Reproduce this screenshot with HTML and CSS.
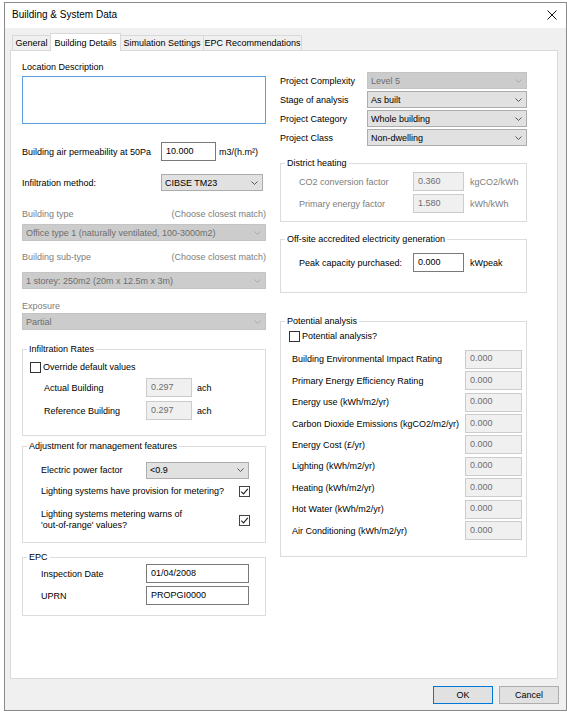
FILE: index.html
```html
<!DOCTYPE html>
<html lang="en">
<head>
    <meta charset="UTF-8">
    <title>Building &amp; System Data</title>
    <link rel="stylesheet" href="styles.css">
</head>
<body>

<div class="window">
    <div class="titlebar">
        <span class="title">Building &amp; System Data</span>
        <svg class="close" width="10" height="10" viewBox="0 0 10 10">
            <path d="M0.5 0.5 L9.5 9.5 M9.5 0.5 L0.5 9.5" stroke="#111" stroke-width="1" fill="none"/>
        </svg>
    </div>

    <div class="dialog-body">
        <div class="tabs">
            <div class="tab tab-general">General</div>
            <div class="tab tab-active">Building Details</div>
            <div class="tab tab-sim">Simulation Settings</div>
            <div class="tab tab-epc">EPC Recommendations</div>
        </div>

        <div class="panel">
            <!-- left column -->
            <div class="col">
                <div class="plain-label">Location Description</div>
                <textarea class="memo"></textarea>

                <div class="row row-perm">
                    <span class="lbl w139">Building air permeability at 50Pa</span>
                    <input class="edit w55" type="text" value="10.000">
                    <span class="unit u3">m3/(h.m²)</span>
                </div>

                <div class="row row-infil">
                    <span class="lbl w139">Infiltration method:</span>
                    <div class="combo w102"><span>CIBSE TM23</span><svg class="chev" width="7" height="4" viewBox="0 0 7 4"><path d="M0.5 0.5 L3.5 3.5 L6.5 0.5" stroke="#555" fill="none"/></svg></div>
                </div>

                <div class="hint hint-type"><span>Building type</span><span>(Choose closest match)</span></div>
                <div class="combo combo-off full mt4"><span>Office type 1 (naturally ventilated, 100-3000m2)</span><svg class="chev" width="7" height="4" viewBox="0 0 7 4"><path d="M0.5 0.5 L3.5 3.5 L6.5 0.5" stroke="#aaa" fill="none"/></svg></div>

                <div class="hint hint-sub"><span>Building sub-type</span><span>(Choose closest match)</span></div>
                <div class="combo combo-off full mt9"><span>1 storey: 250m2 (20m x 12.5m x 3m)</span><svg class="chev" width="7" height="4" viewBox="0 0 7 4"><path d="M0.5 0.5 L3.5 3.5 L6.5 0.5" stroke="#aaa" fill="none"/></svg></div>

                <div class="hint hint-exp"><span>Exposure</span></div>
                <div class="combo combo-off full mt1"><span>Partial</span><svg class="chev" width="7" height="4" viewBox="0 0 7 4"><path d="M0.5 0.5 L3.5 3.5 L6.5 0.5" stroke="#aaa" fill="none"/></svg></div>

                <fieldset class="group g-infil">
                    <legend>Infiltration Rates</legend>
                    <div class="group-body">
                        <div class="check-row">
                            <span class="check"></span>
                            <span>Override default values</span>
                        </div>
                        <div class="row rate-row mt5">
                            <span class="lbl w102">Actual Building</span>
                            <input class="edit edit-off w46" type="text" value="0.297" disabled>
                            <span class="unit u5">ach</span>
                        </div>
                        <div class="row rate-row mt4">
                            <span class="lbl w102">Reference Building</span>
                            <input class="edit edit-off w46" type="text" value="0.297" disabled>
                            <span class="unit u5">ach</span>
                        </div>
                    </div>
                </fieldset>

                <fieldset class="group g-adjust">
                    <legend>Adjustment for management features</legend>
                    <div class="group-body">
                        <div class="row adj-row h18">
                            <span class="lbl w105">Electric power factor</span>
                            <div class="combo w103"><span>&lt;0.9</span><svg class="chev" width="7" height="4" viewBox="0 0 7 4"><path d="M0.5 0.5 L3.5 3.5 L6.5 0.5" stroke="#555" fill="none"/></svg></div>
                        </div>
                        <div class="row adj-row h12 mt6">
                            <span class="lbl w198">Lighting systems have provision for metering?</span>
                            <span class="check checked"><svg width="9" height="9" viewBox="0 0 9 9"><path d="M1.2 4.6 L3.5 6.9 L7.8 1.8" stroke="#222" stroke-width="1.1" fill="none"/></svg></span>
                        </div>
                        <div class="row adj-row h22 mt12">
                            <span class="lbl w198 two-line">Lighting systems metering warns of<br>'out-of-range' values?</span>
                            <span class="check checked"><svg width="9" height="9" viewBox="0 0 9 9"><path d="M1.2 4.6 L3.5 6.9 L7.8 1.8" stroke="#222" stroke-width="1.1" fill="none"/></svg></span>
                        </div>
                    </div>
                </fieldset>

                <fieldset class="group g-epc">
                    <legend>EPC</legend>
                    <div class="group-body">
                        <div class="row adj-row h19">
                            <span class="lbl w105">Inspection Date</span>
                            <input class="edit w103" type="text" value="01/04/2008">
                        </div>
                        <div class="row adj-row h19 mt3">
                            <span class="lbl w105">UPRN</span>
                            <input class="edit w103" type="text" value="PROPGI0000">
                        </div>
                    </div>
                </fieldset>
            </div>

            <!-- right column -->
            <div class="col">
                <div class="row proj-row first">
                    <span class="lbl w87">Project Complexity</span>
                    <div class="combo combo-off w160"><span>Level 5</span><svg class="chev" width="7" height="4" viewBox="0 0 7 4"><path d="M0.5 0.5 L3.5 3.5 L6.5 0.5" stroke="#aaa" fill="none"/></svg></div>
                </div>
                <div class="row proj-row">
                    <span class="lbl w87">Stage of analysis</span>
                    <div class="combo w160"><span>As built</span><svg class="chev" width="7" height="4" viewBox="0 0 7 4"><path d="M0.5 0.5 L3.5 3.5 L6.5 0.5" stroke="#555" fill="none"/></svg></div>
                </div>
                <div class="row proj-row">
                    <span class="lbl w87">Project Category</span>
                    <div class="combo w160"><span>Whole building</span><svg class="chev" width="7" height="4" viewBox="0 0 7 4"><path d="M0.5 0.5 L3.5 3.5 L6.5 0.5" stroke="#555" fill="none"/></svg></div>
                </div>
                <div class="row proj-row">
                    <span class="lbl w87">Project Class</span>
                    <div class="combo w160"><span>Non-dwelling</span><svg class="chev" width="7" height="4" viewBox="0 0 7 4"><path d="M0.5 0.5 L3.5 3.5 L6.5 0.5" stroke="#555" fill="none"/></svg></div>
                </div>

                <fieldset class="group g-district">
                    <legend>District heating</legend>
                    <div class="group-body">
                        <div class="row h19">
                            <span class="lbl w114 muted">CO2 conversion factor</span>
                            <input class="edit edit-off w51" type="text" value="0.360" disabled>
                            <span class="unit u6 muted">kgCO2/kWh</span>
                        </div>
                        <div class="row h19 mt3">
                            <span class="lbl w114 muted">Primary energy factor</span>
                            <input class="edit edit-off w51" type="text" value="1.580" disabled>
                            <span class="unit u6 muted">kWh/kWh</span>
                        </div>
                    </div>
                </fieldset>

                <fieldset class="group g-offsite">
                    <legend>Off-site accredited electricity generation</legend>
                    <div class="group-body">
                        <div class="row h19">
                            <span class="lbl w114">Peak capacity purchased:</span>
                            <input class="edit w51" type="text" value="0.000">
                            <span class="unit u6">kWpeak</span>
                        </div>
                    </div>
                </fieldset>

                <fieldset class="group g-potential">
                    <legend>Potential analysis</legend>
                    <div class="group-body">
                        <div class="check-row h13">
                            <span class="check"></span>
                            <span>Potential analysis?</span>
                        </div>
                        <div class="pot-list">
                            <div class="row pot-row"><span class="lbl w173">Building Environmental Impact Rating</span><input class="edit edit-off w57" type="text" value="0.000" disabled></div>
                            <div class="row pot-row"><span class="lbl w173">Primary Energy Efficiency Rating</span><input class="edit edit-off w57" type="text" value="0.000" disabled></div>
                            <div class="row pot-row"><span class="lbl w173">Energy use (kWh/m2/yr)</span><input class="edit edit-off w57" type="text" value="0.000" disabled></div>
                            <div class="row pot-row"><span class="lbl w173">Carbon Dioxide Emissions (kgCO2/m2/yr)</span><input class="edit edit-off w57" type="text" value="0.000" disabled></div>
                            <div class="row pot-row"><span class="lbl w173">Energy Cost (£/yr)</span><input class="edit edit-off w57" type="text" value="0.000" disabled></div>
                            <div class="row pot-row"><span class="lbl w173">Lighting (kWh/m2/yr)</span><input class="edit edit-off w57" type="text" value="0.000" disabled></div>
                            <div class="row pot-row"><span class="lbl w173">Heating (kWh/m2/yr)</span><input class="edit edit-off w57" type="text" value="0.000" disabled></div>
                            <div class="row pot-row"><span class="lbl w173">Hot Water (kWh/m2/yr)</span><input class="edit edit-off w57" type="text" value="0.000" disabled></div>
                            <div class="row pot-row"><span class="lbl w173">Air Conditioning (kWh/m2/yr)</span><input class="edit edit-off w57" type="text" value="0.000" disabled></div>
                        </div>
                    </div>
                </fieldset>
            </div>
        </div>

        <div class="buttons">
            <button class="btn btn-default">OK</button>
            <button class="btn">Cancel</button>
        </div>
    </div>
</div>

</body>
</html>
```

FILE: styles.css
```css
/* Page */
html, body {
    margin: 0;
    padding: 0;
}

body {
    background-color: #fff;
    font-family: "Liberation Sans", Arial, sans-serif;
    font-size: 9px;
    color: #000;
}

/* Window frame */
.window {
    margin: 2px 0 0 4px;
    width: 563px;
    height: 709px;
    box-sizing: border-box;
    border: 1px solid #8a8a8a;
    background-color: #f0f0f0;
}

.titlebar {
    height: 25px;
    background-color: #fff;
    display: flex;
    align-items: center;
    padding-left: 7px;
}

.title {
    font-size: 10px;
    margin-top: -2px;
}

.close {
    margin-left: auto;
    margin-right: 9px;
    margin-top: -1px;
}

.dialog-body {
    padding: 5px 7px 0 5px;
}

/* Tabs */
.tabs {
    display: flex;
    align-items: flex-end;
    height: 17px;
    padding-left: 2px;
}

.tab {
    box-sizing: border-box;
    height: 15px;
    border: 1px solid #d9d9d9;
    border-bottom: none;
    border-left: none;
    background-color: #f0f0f0;
    text-align: center;
    line-height: 15px;
    white-space: nowrap;
}

.tab-general {
    width: 38px;
    border-left: 1px solid #d9d9d9;
    border-right: none;
}

.tab-active {
    width: 71px;
    height: 18px;
    margin-bottom: -1px;
    border-left: 1px solid #d9d9d9;
    background-color: #fff;
    position: relative;
    z-index: 1;
    line-height: 18px;
}

.tab-sim {
    width: 83px;
}

.tab-epc {
    width: 98px;
}

/* Tab page */
.panel {
    box-sizing: border-box;
    width: 548px;
    height: 629px;
    border: 1px solid #d9d9d9;
    background-color: #fff;
    padding: 10px 0 0 11px;
    display: grid;
    grid-template-columns: 244px 247px;
    column-gap: 14px;
    align-items: start;
}

.col {
    display: flex;
    flex-direction: column;
}

.plain-label {
    height: 12px;
    line-height: 12px;
}

.memo {
    display: block;
    box-sizing: border-box;
    margin: 3px 0 0 0;
    width: 244px;
    height: 48px;
    border: 1px solid #5b9ee0;
    resize: none;
    padding: 0;
}

/* generic rows */
.row {
    display: flex;
    align-items: center;
}

.lbl {
    flex: none;
    white-space: nowrap;
}

.unit {
    white-space: nowrap;
}

.u3 { margin-left: 3px; }
.u5 { margin-left: 5px; }
.u6 { margin-left: 6px; }

.muted {
    color: #7d7d7d;
}

.w46 { width: 46px; }
.w51 { width: 51px; }
.w55 { width: 55px; }
.w57 { width: 57px; }
.w87 { width: 87px; }
.w102 { width: 102px; }
.w103 { width: 103px; }
.w105 { width: 105px; }
.w114 { width: 114px; }
.w139 { width: 139px; }
.w160 { width: 160px; }
.w173 { width: 173px; }
.w198 { width: 198px; }

.h12 { height: 12px; }
.h13 { height: 13px; }
.h18 { height: 18px; }
.h19 { height: 19px; }
.h22 { height: 22px; }

.mt1 { margin-top: 1px; }
.mt3 { margin-top: 3px; }
.mt4 { margin-top: 4px; }
.mt5 { margin-top: 5px; }
.mt6 { margin-top: 6px; }
.mt9 { margin-top: 9px; }
.mt12 { margin-top: 12px; }

.row-perm {
    margin-top: 18px;
    height: 19px;
}

.row-infil {
    margin-top: 13px;
    height: 17px;
}

.hint {
    height: 12px;
    line-height: 12px;
    display: flex;
    justify-content: space-between;
    color: #7d7d7d;
}

.hint-type { margin-top: 17px; }
.hint-sub { margin-top: 10px; }
.hint-exp { margin-top: 11px; }

/* Text boxes */
.edit {
    box-sizing: border-box;
    height: 19px;
    margin: 0;
    padding: 0 4px 2px 4px;
    border: 1px solid #7a7a7a;
    background-color: #fff;
    font: inherit;
    color: #000;
    outline: none;
}

.edit-off {
    background-color: #f0f0f0;
    border-color: #cccccc;
    color: #6d6d6d;
}

/* Combo boxes */
.combo {
    box-sizing: border-box;
    height: 17px;
    display: flex;
    align-items: center;
    justify-content: space-between;
    padding: 0 4px 0 3px;
    border: 1px solid #adadad;
    background-color: #e1e1e1;
    white-space: nowrap;
}

.combo-off {
    background-color: #cccccc;
    border-color: #c4c4c4;
    color: #6d6d6d;
}

.combo.full {
    width: 244px;
}

.chev {
    flex: none;
}

/* Check boxes */
.check {
    box-sizing: border-box;
    width: 11px;
    height: 11px;
    border: 1px solid #333;
    background-color: #fff;
    display: inline-flex;
    align-items: center;
    justify-content: center;
    flex: none;
}

.check.checked {
    border-color: #444;
}

.check-row {
    display: flex;
    align-items: center;
    height: 12px;
    gap: 2px;
}

/* Group boxes */
.group {
    margin: 0;
    padding: 0;
    border: 1px solid #dcdcdc;
    min-width: 0;
    box-sizing: border-box;
}

.group legend {
    margin-left: 4px;
    padding: 0 2px;
    line-height: 12px;
    height: 12px;
}

.g-infil { margin-top: 13px; }
.g-infil .group-body { padding: 6px 7px 15px 7px; }
.rate-row { height: 19px; padding-left: 14px; }

.g-adjust { margin-top: 4px; }
.g-adjust .group-body { padding: 9px 7px 11px 7px; }
.adj-row { padding-left: 11px; }
.two-line { line-height: 11px; }

.g-epc { margin-top: 8px; }
.g-epc .group-body { padding: 1px 7px 10px 7px; }

.proj-row {
    height: 17px;
    margin-top: 2px;
}

.proj-row.first {
    margin-top: 11px;
}

.g-district { margin-top: 11px; }
.g-district .group-body { padding: 3px 0 8px 18px; }

.g-offsite { margin-top: 11px; }
.g-offsite .group-body { padding: 8px 0 20px 18px; }

.g-potential { margin-top: 22px; }
.g-potential .group-body { padding: 3px 0 16px 8px; }

.pot-list {
    padding-top: 5.5px;
}

.pot-row {
    height: 19px;
    margin-top: 2.4px;
    padding-left: 3px;
}

/* Buttons */
.buttons {
    display: flex;
    justify-content: flex-end;
    gap: 6px;
    margin-top: 7px;
}

.btn {
    box-sizing: border-box;
    width: 60px;
    height: 18px;
    margin: 0;
    padding: 0;
    border: 1px solid #adadad;
    background-color: #e1e1e1;
    font: inherit;
    color: #000;
}

.btn-default {
    border-color: #0078d7;
}
```
